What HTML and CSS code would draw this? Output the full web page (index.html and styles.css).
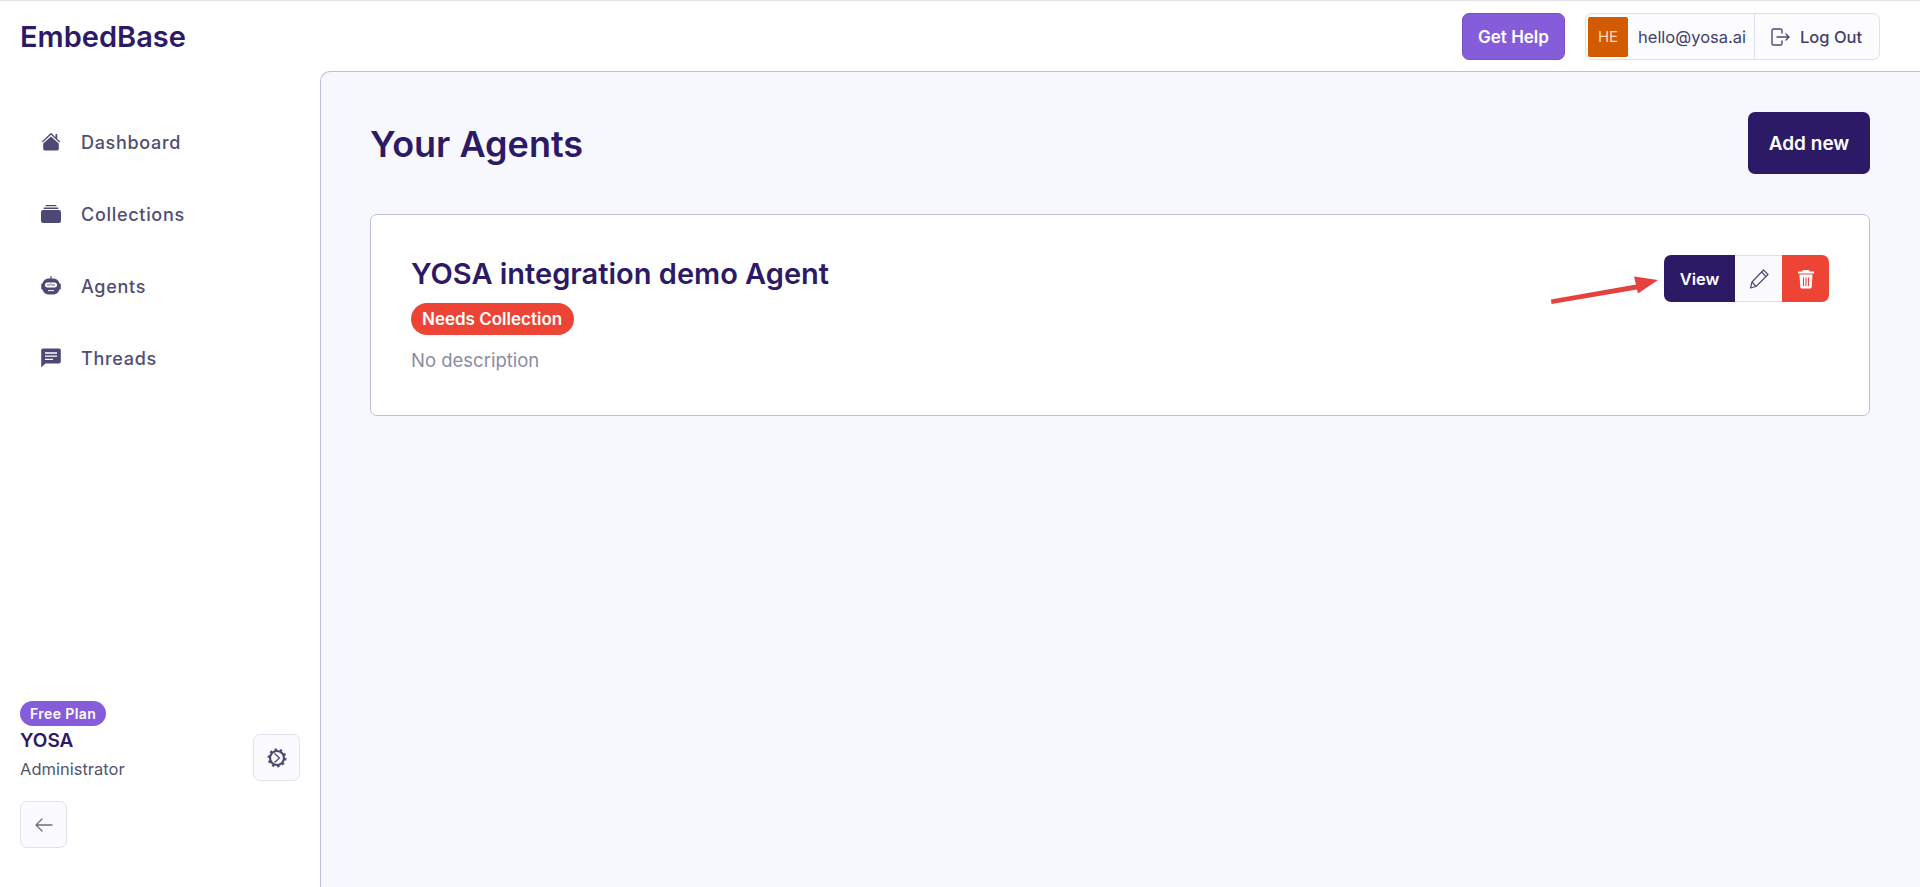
FILE: index.html
```html
<!doctype html>
<html>
<head>
  <title>EmbedBase</title>
  <link rel="stylesheet" href="styles.css">
</head>
<body>

  <div class="topbar">
    <div class="logo">EmbedBase</div>
    <div class="topRight">
      <button class="helpBtn">Get Help</button>
      <div class="userBox">
        <div class="userInfo">
          <div class="avatar">HE</div>
          <span class="email">hello@yosa.ai</span>
        </div>
        <div class="logout">
          <svg width="20" height="20" viewBox="0 0 20 20" fill="none" stroke="#4c4a75" stroke-width="1.4" stroke-linecap="round" stroke-linejoin="round">
            <path d="M12 6V3.6A1.6 1.6 0 0 0 10.4 2H3.6A1.6 1.6 0 0 0 2 3.6v12.8A1.6 1.6 0 0 0 3.6 18h6.8a1.6 1.6 0 0 0 1.6-1.6V14"/>
            <path d="M7 10h12M16 7l3 3-3 3"/>
          </svg>
          <span>Log Out</span>
        </div>
      </div>
    </div>
  </div>

  <div class="layout">
    <div class="sidebar">
      <div class="nav">
        <a class="navItem">
          <svg width="20" height="20" viewBox="0 0 20 20" fill="#4c4a75"><path d="M10 .8 0.8 9.6l.8.9L10 2.800l8.400 7.700.8-.9-3-2.800V2h-1.700v3.300z"/><path d="M10 4.400 2.200 11.400v5.400c0 .9.700 1.600 1.600 1.600h12.400c.9 0 1.600-.7 1.600-1.600v-5.400z"/></svg>
          <span>Dashboard</span>
        </a>
        <a class="navItem">
          <svg width="20" height="20" viewBox="0 0 20 20" fill="#4c4a75"><rect x="4.5" y="1" width="11" height="1.3" rx=".6"/><rect x="2.5" y="3.400" width="15" height="1.5" rx=".7"/><rect x="0" y="6" width="20" height="13" rx="2"/></svg>
          <span>Collections</span>
        </a>
        <a class="navItem">
          <svg width="20" height="20" viewBox="0 0 20 20" fill="#4c4a75"><rect x="9.400" y="0" width="1.200" height="3"/><path d="M8 2.600h4c3.400 0 6 2.200 6.400 5h.4c.6 0 1 .4 1 1v4c0 .6-.4 1-1 1h-.4c-.4 2.800-3 5-6.400 5H8c-3.400 0-6-2.200-6.400-5h-.4c-.6 0-1-.4-1-1v-4c0-.6.400-1 1-1h.4C2 4.800 4.600 2.600 8 2.600z"/><rect x="4" y="6.400" width="12" height="5" rx="2.500" fill="#fff"/><path d="M6 9h2.400l1.200-.8 1.200.8H14" stroke="#4c4a75" stroke-width=".9" fill="none"/><path d="M7 14.600h6" stroke="#fff" stroke-width="1"/></svg>
          <span>Agents</span>
        </a>
        <a class="navItem">
          <svg width="20" height="20" viewBox="0 0 20 20" fill="#4c4a75"><path d="M2 .6h16c1 0 1.800.8 1.800 1.800v11.200c0 1-.8 1.800-1.800 1.800H4.400L.2 19.400V2.400C.2 1.400 1 .6 2 .6z"/><path d="M4 5h12M4 8.200h12M4 11.400h8" stroke="#fff" stroke-width="1.300"/></svg>
          <span>Threads</span>
        </a>
      </div>

      <div class="sideBottom">
        <div class="planRow">
          <div>
            <span class="planBadge">Free Plan</span>
            <div class="orgName">YOSA</div>
            <div class="orgRole">Administrator</div>
          </div>
          <button class="iconBtn">
            <svg width="20" height="20" viewBox="0 0 20 20" fill="none" stroke="#4c4a75">
              <circle cx="10" cy="10" r="7" stroke-width="2.200"/>
              <circle cx="10" cy="10" r="8.400" stroke-width="2.200" stroke-dasharray="2.400 2.880"/>
              <path d="M7.500 5.500 12.500 10l-5 4.500" stroke-width="1.300"/>
            </svg>
          </button>
        </div>
        <button class="iconBtn">
          <svg width="20" height="20" viewBox="0 0 20 20" fill="none" stroke="#6d6d80" stroke-width="1.300" stroke-linecap="round" stroke-linejoin="round"><path d="M2 10h16M8 4l-6 6 6 6"/></svg>
        </button>
      </div>
    </div>

    <div class="main">
      <div class="mainHead">
        <h1>Your Agents</h1>
        <button class="addBtn">Add new</button>
      </div>

      <div class="card">
        <div class="cardText">
          <h2>YOSA integration demo Agent</h2>
          <span class="needsBadge">Needs Collection</span>
          <p>No description</p>
        </div>
        <div class="actions">
          <button class="viewBtn">View</button>
          <button class="editBtn">
            <svg width="20" height="20" viewBox="0 0 20 20" fill="none" stroke="#4c4a75" stroke-width="1.200" stroke-linejoin="round"><path d="M14.500 1 19 5.500 7 17.500 1.500 19 3 13z"/><path d="M12.500 3l4.500 4.500M3 13l4 4.500"/></svg>
          </button>
          <button class="deleteBtn">
            <svg width="18" height="20" viewBox="0 0 18 20" fill="#fff"><path d="M6 1h6l1 1.500h4V4.500H1V2.500h4z"/><path d="M2.500 5.500h13l-.8 12.500c0 .8-.7 1.500-1.500 1.500H4.800c-.8 0-1.500-.7-1.500-1.500z"/><path d="M6.500 8.500v8.500M9 8.500v8.500M11.500 8.500v8.500" stroke="#ee4436" stroke-width="1.100"/></svg>
          </button>
        </div>
        <!-- red arrow drawn on top of the screenshot -->
        <svg class="arrow" width="120" height="30" viewBox="0 0 120 30">
          <path d="M1 24.500 86 9.500 84 1.500 108 5 88 18.500 87 14.500 1.500 29z" fill="#e5413d"/>
        </svg>
      </div>
    </div>
  </div>

</body>
</html>
```

FILE: styles.css
```css
* {
  box-sizing: border-box;
}
body {
  margin: 0;
  height: 100vh;
  overflow: hidden;
  display: flex;
  flex-direction: column;
  background: #ffffff;
  color: #2e1a66;
  font-family: "Inter", "Liberation Sans", sans-serif;
  border-top: 1px solid #e4e4e8;
}
button {
  font-family: inherit;
  cursor: pointer;
}

.topbar {
  height: 70px;
  flex-shrink: 0;
  display: flex;
  align-items: flex-start;
  justify-content: space-between;
  padding: 12px 40px 0 20px;
}
.logo {
  font-size: 29px;
  line-height: 48px;
  font-weight: 600;
  color: #2d1a66;
}
.topRight {
  display: flex;
  gap: 20px;
}
.helpBtn {
  width: 103px;
  height: 47px;
  background: #855ddb;
  border: 1px solid #7550c6;
  border-radius: 7px;
  color: #ffffff;
  font-size: 17px;
  font-weight: 600;
  padding: 0;
}
.userBox {
  width: 295px;
  height: 47px;
  display: flex;
  background: #fcfcff;
  border: 1px solid #e0e0ec;
  border-radius: 7px;
  font-size: 16.5px;
  color: #41406b;
}
.userInfo {
  display: flex;
  align-items: center;
  gap: 10px;
  padding-left: 2px;
  width: 169px;
  border-right: 1px solid #e0e0ec;
}
.avatar {
  width: 40px;
  height: 40px;
  background: #d25a00;
  border-radius: 2px;
  color: #fbd9bd;
  font-size: 15px;
  display: flex;
  align-items: center;
  justify-content: center;
}
.logout {
  flex: 1;
  display: flex;
  align-items: center;
  gap: 10px;
  padding-left: 15px;
  font-weight: 500;
}

.layout {
  flex: 1;
  display: flex;
  min-height: 0;
}
.sidebar {
  width: 320px;
  flex-shrink: 0;
  display: flex;
  flex-direction: column;
  justify-content: space-between;
  padding: 35px 20px 39px 20px;
}
.navItem {
  height: 72px;
  display: flex;
  align-items: center;
  gap: 20px;
  padding-left: 21px;
  font-size: 18px;
  font-weight: 500;
  letter-spacing: 0.7px;
  color: #4f4e74;
}
.planRow {
  display: flex;
  justify-content: space-between;
  align-items: flex-end;
  margin-bottom: 20px;
}
.planBadge {
  display: inline-block;
  height: 25px;
  line-height: 25px;
  padding: 0 10px;
  border-radius: 13px;
  background: #855ddb;
  color: #ffffff;
  font-size: 14px;
  font-weight: 600;
  letter-spacing: 0.4px;
}
.orgName {
  font-size: 19px;
  font-weight: 600;
  line-height: 24px;
  margin-top: 3px;
  color: #2d1a66;
}
.orgRole {
  font-size: 16.5px;
  line-height: 24px;
  margin-top: 4px;
  color: #55546f;
}
.iconBtn {
  width: 47px;
  height: 47px;
  padding: 0;
  display: flex;
  align-items: center;
  justify-content: center;
  background: #fbfbfe;
  border: 1px solid #e2e2ee;
  border-radius: 7px;
}

.main {
  flex: 1;
  background: #f7f8fe;
  border-left: 1px solid #bfbfdc;
  border-top: 1px solid #bfbfdc;
  border-top-left-radius: 10px;
  padding: 40px 50px 0 49px;
}
.mainHead {
  height: 62px;
  display: flex;
  align-items: center;
  justify-content: space-between;
  margin-bottom: 40px;
}
.mainHead h1 {
  margin: 2px 0 0 0;
  font-size: 36px;
  font-weight: 600;
  color: #2d1a66;
}
.addBtn {
  width: 122px;
  height: 62px;
  background: #2d1a66;
  border: none;
  border-radius: 7px;
  color: #ffffff;
  font-size: 19px;
  font-weight: 600;
  padding: 0;
}

.card {
  position: relative;
  height: 202px;
  display: flex;
  justify-content: space-between;
  align-items: flex-start;
  background: #ffffff;
  border: 1px solid #bfbfdc;
  border-radius: 7px;
  padding: 40px;
}
.cardText h2 {
  margin: 0 0 10px 0;
  font-size: 29px;
  line-height: 38px;
  font-weight: 600;
  color: #2d1a66;
}
.needsBadge {
  display: inline-block;
  height: 32px;
  line-height: 32px;
  padding: 0 12px 0 11px;
  border-radius: 16px;
  background: #ee4436;
  color: #ffffff;
  font-size: 17px;
  font-weight: 600;
}
.cardText p {
  margin: 12px 0 0 0;
  font-size: 18.5px;
  line-height: 26px;
  color: #8b8ca5;
}
.actions {
  display: flex;
  height: 47px;
}
.actions button {
  height: 47px;
  padding: 0;
  display: flex;
  align-items: center;
  justify-content: center;
}
.viewBtn {
  width: 71px;
  background: #2d1a66;
  border: none;
  border-radius: 7px 0 0 7px;
  color: #ffffff;
  font-size: 16.5px;
  font-weight: 600;
}
.editBtn {
  width: 47px;
  background: #fbfbfe;
  border: 1px solid #e0e0ec;
  border-left: none;
  border-right: none;
}
.deleteBtn {
  width: 47px;
  background: #ee4436;
  border: none;
  border-radius: 0 7px 7px 0;
}
.arrow {
  position: absolute;
  left: 1179px;
  top: 60px;
}
```
